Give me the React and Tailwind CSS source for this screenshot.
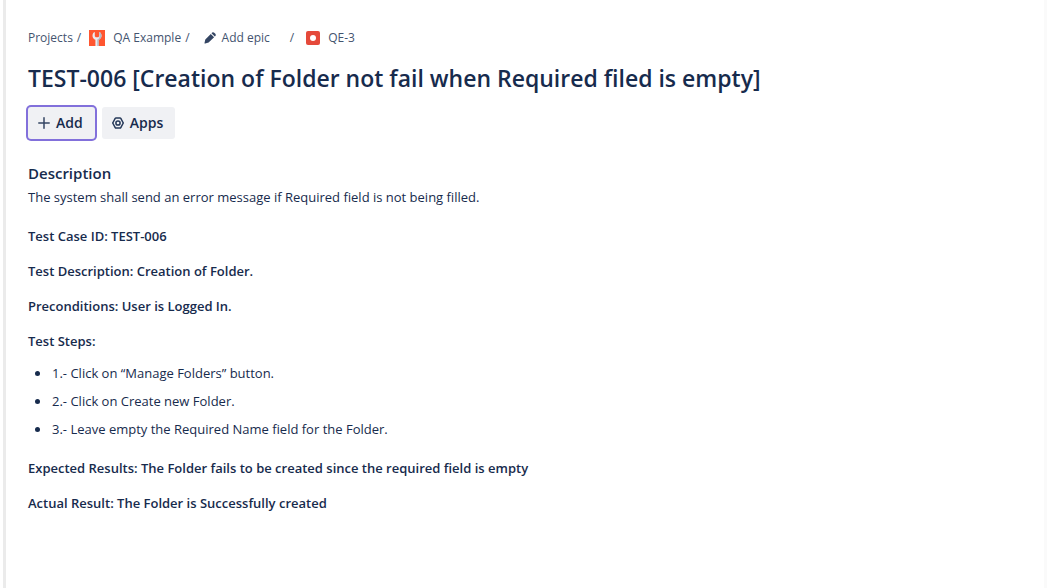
const details = [
  "Test Case ID: TEST-006",
  "Test Description: Creation of Folder.",
  "Preconditions: User is Logged In.",
  "Test Steps:",
];

const steps = [
  "1.- Click on “Manage Folders” button.",
  "2.- Click on Create new Folder.",
  "3.- Leave empty the Required Name field for the Folder.",
];

const results = [
  "Expected Results: The Folder fails to be created since the required field is empty",
  "Actual Result: The Folder is Successfully created",
];

function WrenchIcon() {
  return (
    <svg viewBox="0 0 16 16" className="size-4 shrink-0" aria-hidden="true">
      <rect width="16" height="16" fill="#ff5630" />
      <path
        d="M5.800 2C4.200 2.600 3.400 4.200 3.500 6c.1 1.800 1.200 3.200 2.900 3.800V16h3.200V9.800c1.700-.6 2.800-2 2.900-3.800.1-1.800-.7-3.400-2.300-4v4.300L9.300 7.300H6.700l-.9-1z"
        fill="#ebecf0"
      />
      <path d="M8.300 9.500h1.300V16H8.300zM10.200 2c1.600.6 2.400 2.200 2.300 4-.1 1.800-1.200 3.200-2.900 3.800L8.300 9.500c1.500-.8 2.300-1.700 2.300-3.300z" fill="#b3bac5" />
    </svg>
  );
}

function PencilIcon() {
  return (
    <svg viewBox="0 0 12 12" className="size-3 shrink-0" fill="#344563" aria-hidden="true">
      <path d="M6.800 1.900 10.100 5.200 4.600 10.600 1.200 11.600Q.3 11.700.5 10.900L1.300 7.400z" />
      <path d="M7.500 1.200 8.200.6Q9.200-.2 10.200.7L11.300 1.800Q12.200 2.800 11.400 3.900L10.800 4.500z" />
    </svg>
  );
}

function BugIcon() {
  return (
    <svg viewBox="0 0 14 14" className="size-3.5 shrink-0" aria-hidden="true">
      <rect width="14" height="14" rx="2" fill="#e5493a" />
      <circle cx="7" cy="7" r="3" fill="#fff" />
    </svg>
  );
}

function PlusIcon() {
  return (
    <svg viewBox="0 0 12 12" className="size-3 shrink-0" stroke="#344563" strokeWidth="1.500" strokeLinecap="round" aria-hidden="true">
      <path d="M6 .8v10.400M.8 6h10.400" />
    </svg>
  );
}

function AppsIcon() {
  return (
    <svg viewBox="0 0 12 12" className="size-3 shrink-0" fill="none" stroke="#253858" strokeWidth="1.500" strokeLinejoin="round" aria-hidden="true">
      <path d="M4 .9h4Q8.500.9 8.800 1.400L11 5.500Q11.300 6 11 6.500L8.800 10.600Q8.500 11.100 8 11.100H4Q3.500 11.100 3.200 10.600L1 6.500Q.7 6 1 5.500L3.200 1.400Q3.500.9 4 .9z" />
      <circle cx="6" cy="6" r="2.100" />
    </svg>
  );
}

export default function App() {
  return (
    <div className="flex min-h-screen bg-white pl-[3px] font-['Open_Sans','Noto_Sans',sans-serif] text-[13px] leading-5 text-[#172b4d]">
      <main className="min-w-0 flex-1 border-r-[3px] border-l-[3px] border-r-[#fafafa] border-l-[#ebebeb] px-[22px] pt-7 pb-12">
        <nav aria-label="Breadcrumb" className="flex items-center text-xs leading-5 text-[#44546f]">
          <a href="#projects">Projects</a>
          <span className="ml-1">/</span>
          <a href="#project" className="ml-2 flex items-center gap-2">
            <WrenchIcon />
            QA Example
          </a>
          <span className="ml-1">/</span>
          <button type="button" className="ml-3.5 flex items-center gap-1.5">
            <PencilIcon />
            Add epic
          </button>
          <span className="ml-5">/</span>
          <a href="#issue" className="ml-3 flex items-center gap-2">
            <BugIcon />
            QE-3
          </a>
        </nav>

        <h1 className="mt-4 text-[23px] leading-7 font-semibold">
          TEST-006 [Creation of Folder not fail when Required filed is empty]
        </h1>

        <div className="mt-[15px] flex gap-[7px] text-sm font-semibold">
          <button type="button" className="flex h-8 items-center gap-1.5 rounded-[3px] bg-[#f0f1f4] pr-3 pl-2.5 ring-2 ring-[#8270db]">
            <PlusIcon />
            Add
          </button>
          <button type="button" className="flex h-8 items-center gap-1.5 rounded-[3px] bg-[#f0f1f4] pr-3 pl-2.5">
            <AppsIcon />
            Apps
          </button>
        </div>

        <h2 className="mt-6 text-[15px] leading-5 font-semibold">Description</h2>
        <p className="mt-1">The system shall send an error message if Required field is not being filled.</p>

        <div className="mt-[19px] flex flex-col gap-[15px] font-semibold">
          {details.map((line) => (
            <p key={line}>{line}</p>
          ))}
        </div>
        <ul className="mt-3 flex list-none flex-col gap-2">
          {steps.map((step) => (
            <li key={step} className="flex items-center gap-3 pl-[7px]">
              <span className="size-[5px] shrink-0 rounded-full bg-[#172b4d]" />
              {step}
            </li>
          ))}
        </ul>
        <div className="mt-[19px] flex flex-col gap-[15px] font-semibold">
          {results.map((line) => (
            <p key={line}>{line}</p>
          ))}
        </div>
      </main>
    </div>
  );
}
